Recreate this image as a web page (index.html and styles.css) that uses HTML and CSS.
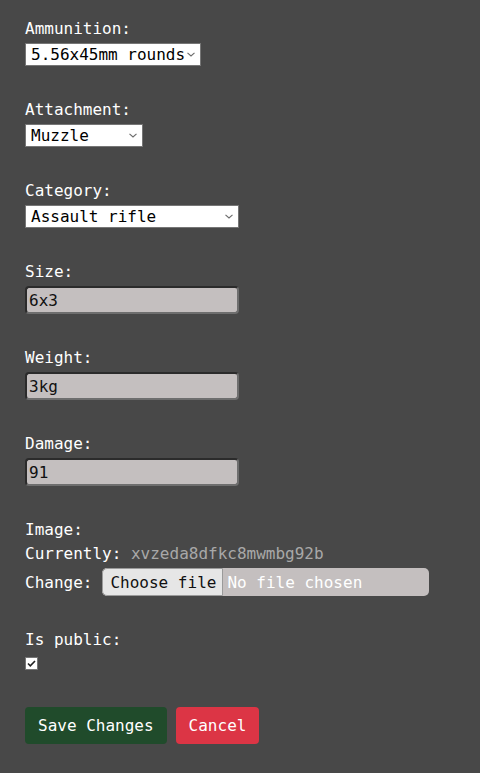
FILE: index.html
```html
<!DOCTYPE html>
<html>
<head>
<meta charset="utf-8">
<link rel="stylesheet" href="styles.css">
</head>
<body>
<form class="form">
  <div class="group">
    <label class="lbl">Ammunition:</label>
    <div class="sel-wrap sel-ammo">
      <select class="sel"><option>5.56x45mm rounds</option></select>
      <svg class="chev" width="8" height="5" viewBox="0 0 8 5"><path d="M0.5 0.8 L4 4 L7.5 0.8" fill="none" stroke="#6b6b6b" stroke-width="1.1"/></svg>
    </div>
  </div>
  <div class="group">
    <label class="lbl">Attachment:</label>
    <div class="sel-wrap sel-att">
      <select class="sel"><option>Muzzle</option></select>
      <svg class="chev" width="8" height="5" viewBox="0 0 8 5"><path d="M0.5 0.8 L4 4 L7.5 0.8" fill="none" stroke="#6b6b6b" stroke-width="1.1"/></svg>
    </div>
  </div>
  <div class="group">
    <label class="lbl">Category:</label>
    <div class="sel-wrap sel-cat">
      <select class="sel"><option>Assault rifle</option></select>
      <svg class="chev" width="8" height="5" viewBox="0 0 8 5"><path d="M0.5 0.8 L4 4 L7.5 0.8" fill="none" stroke="#6b6b6b" stroke-width="1.1"/></svg>
    </div>
  </div>
  <div class="group">
    <label class="lbl">Size:</label>
    <input class="txt" type="text" value="6x3">
  </div>
  <div class="group">
    <label class="lbl">Weight:</label>
    <input class="txt" type="text" value="3kg">
  </div>
  <div class="group">
    <label class="lbl">Damage:</label>
    <input class="txt" type="text" value="91">
  </div>
  <div class="group">
    <label class="lbl">Image:</label>
    <div class="line">Currently: <span class="cur">xvzeda8dfkc8mwmbg92b</span></div>
    <div class="change">
      <span class="change-lbl">Change:</span>
      <div class="file">
        <span class="file-btn">Choose file</span>
        <span class="file-txt">No file chosen</span>
      </div>
    </div>
  </div>
  <div class="group">
    <label class="lbl">Is public:</label>
    <span class="chk" role="checkbox" aria-checked="true">
      <svg width="11" height="11" viewBox="0 0 11 11"><path d="M2 5.5 L4.3 7.8 L9 3" fill="none" stroke="#222" stroke-width="1.6"/></svg>
    </span>
  </div>
  <div class="actions">
    <button class="btn btn-save" type="button">Save Changes</button>
    <button class="btn btn-cancel" type="button">Cancel</button>
  </div>
</form>
</body>
</html>
```

FILE: styles.css
```css
html, body {
  margin: 0;
  padding: 0;
  background: #484848;
}
body {
  font-family: "DejaVu Sans Mono", "Liberation Mono", monospace;
  font-size: 16px;
  color: #ffffff;
}
.form {
  display: flex;
  flex-direction: column;
  gap: 34px;
  padding: 19px 25px 0 25px;
}
.group {
  display: flex;
  flex-direction: column;
  align-items: flex-start;
}
.lbl {
  display: block;
  line-height: 20px;
  margin-bottom: 4px;
}
.sel-wrap {
  position: relative;
  height: 23px;
}
.sel {
  appearance: none;
  -webkit-appearance: none;
  box-sizing: border-box;
  width: 100%;
  height: 23px;
  font-family: inherit;
  font-size: 16px;
  margin: 0;
  padding: 0 0 0 5px;
  border: 1px solid #767676;
  background: #ffffff;
  color: #000000;
  border-radius: 0;
}
.chev {
  position: absolute;
  right: 6px;
  top: 9px;
  pointer-events: none;
}
.sel-ammo { width: 176px; }
.sel-att { width: 118px; }
.sel-cat { width: 214px; }
.txt {
  box-sizing: border-box;
  width: 214px;
  height: 28px;
  margin: 0;
  padding: 0 2px;
  font-family: inherit;
  font-size: 16px;
  color: #111111;
  background: #c4bfbf;
  border: 2px solid #767676;
  border-top-color: #2b2b2b;
  border-left-color: #2b2b2b;
  border-right-color: #6e6e6e;
  border-bottom-color: #6e6e6e;
  border-radius: 4px;
}
.line {
  line-height: 20px;
  margin-bottom: 4px;
}
.cur {
  color: #a8a8a8;
}
.change {
  display: flex;
  align-items: center;
  gap: 10px;
}
.file {
  display: flex;
  width: 327px;
  height: 28px;
  background: #c4bfbf;
  border-radius: 5px;
  overflow: hidden;
}
.file-btn {
  display: flex;
  align-items: center;
  padding: 0 6px 0 7px;
  background: #e6e6e6;
  color: #111111;
  border: 1px solid #9a9a9a;
  border-radius: 5px 0 0 5px;
}
.file-txt {
  display: flex;
  align-items: center;
  padding-left: 4px;
  color: #ffffff;
}
.chk {
  box-sizing: border-box;
  display: flex;
  align-items: center;
  justify-content: center;
  width: 13px;
  height: 13px;
  margin-top: 3px;
  background: #ffffff;
  border: 1px solid #767676;
}
.actions {
  display: flex;
  gap: 9px;
  margin-top: 3px;
}
.btn {
  font-family: inherit;
  font-size: 16px;
  color: #ffffff;
  border: none;
  border-radius: 4px;
  height: 37px;
  padding: 0 13px;
  line-height: 20px;
}
.btn-save { background: #204b2b; }
.btn-cancel { background: #dc3545; }
```
